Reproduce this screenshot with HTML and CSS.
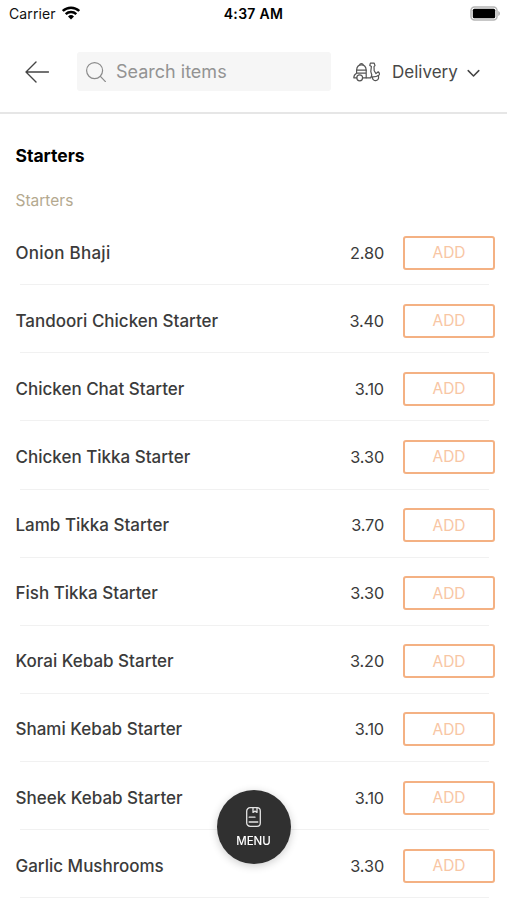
FILE: index.html
```
<!DOCTYPE html>
<html lang="en">
<head>
    <meta charset="UTF-8">
    <meta name="viewport" content="width=device-width, initial-scale=1.0">
    <title>Starters</title>
    <link rel="stylesheet" href="styles.css">
</head>
<body>

<div class="status-bar">
    <div class="carrier">
        <span>Carrier</span>
        <svg class="wifi" viewBox="0 0 18 14" width="18" height="14">
            <path d="M.8 5a11.8 11.8 0 0 1 16.4 0" />
            <path d="M3.7 8.2a7.6 7.6 0 0 1 10.6 0" />
            <path class="dot" d="M9 13.6 6 10.5a4.4 4.4 0 0 1 6 0z" />
        </svg>
    </div>
    <span class="time">4:37 AM</span>
    <div class="battery-wrapper">
        <svg width="31" height="15" viewBox="0 0 31 15">
            <rect x="1" y="1" width="26" height="13" rx="3.5" fill="#fff" stroke="#b5b5b5" stroke-width="1.5" />
            <rect x="2.8" y="2.8" width="22.4" height="9.4" rx="1.5" fill="#000" />
            <path d="M28.2 5v5c2.4-.8 2.4-4.2 0-5z" fill="#b5b5b5" />
        </svg>
    </div>
</div>

<header class="toolbar">
    <svg class="back" viewBox="0 0 24 22" width="24" height="22">
        <path d="M23.5 11H1M11 1 1 11l10 10" />
    </svg>
    <div class="search">
        <svg viewBox="0 0 20 20" width="20" height="20">
            <circle cx="8.6" cy="8.6" r="8" />
            <path d="M14.4 14.4 19.4 19.6" />
        </svg>
        <span>Search items</span>
    </div>
    <div class="order-type">
        <svg class="scooter" viewBox="0 0 27 20" width="27" height="20">
            <path d="M3.6 8.2C3.8 4.6 5.6 2.8 8.4 2.8s4.6 1.8 4.8 5.4z" />
            <path d="M6.6 3C6.9 1.2 9.9 1.2 10.2 3" />
            <path d="M3.6 8.2v3C1.6 12.2.8 13.6.8 15.8h3M13.2 8.2v7.6H9.6M3.6 11.2h9.6" />
            <path d="M3.8 15.8c0-4 5.8-4 5.8 0 0 4-5.8 4-5.8 0z" />
            <path d="M13.2 15.8h4.6l1-2.8-1-3.4.6-5.2-1.6-1 .6-2.2h3.8l.8 2.4-1 1 .2 4.2 1.8 2.8 2.2-1.8c1.4 1.2 1.6 2.6.6 3.4-2 1.4-4.4 2-7.4 1.6" />
            <path d="M19.4 15.4c.2 4.4 6.6 4.2 6.2-.4l-.4-1.4" />
        </svg>
        <span>Delivery</span>
        <svg class="chevron" viewBox="0 0 13 9" width="13" height="9">
            <path d="M1.2 1.6 6.5 7 11.8 1.6" />
        </svg>
    </div>
</header>

<main class="menu">
    <h1>Starters</h1>
    <h2>Starters</h2>
    <ul class="items">
        <li class="item"><span class="name">Onion Bhaji</span><span class="price">2.80</span><button class="add">ADD</button></li>
        <li class="item"><span class="name">Tandoori Chicken Starter</span><span class="price">3.40</span><button class="add">ADD</button></li>
        <li class="item"><span class="name">Chicken Chat Starter</span><span class="price">3.10</span><button class="add">ADD</button></li>
        <li class="item"><span class="name">Chicken Tikka Starter</span><span class="price">3.30</span><button class="add">ADD</button></li>
        <li class="item"><span class="name">Lamb Tikka Starter</span><span class="price">3.70</span><button class="add">ADD</button></li>
        <li class="item"><span class="name">Fish Tikka Starter</span><span class="price">3.30</span><button class="add">ADD</button></li>
        <li class="item"><span class="name">Korai Kebab Starter</span><span class="price">3.20</span><button class="add">ADD</button></li>
        <li class="item"><span class="name">Shami Kebab Starter</span><span class="price">3.10</span><button class="add">ADD</button></li>
        <li class="item"><span class="name">Sheek Kebab Starter</span><span class="price">3.10</span><button class="add">ADD</button></li>
        <li class="item"><span class="name">Garlic Mushrooms</span><span class="price">3.30</span><button class="add">ADD</button></li>
    </ul>
</main>

<button class="menu-button">
    <svg viewBox="0 0 15 20" width="15" height="20">
        <rect x=".7" y=".7" width="13.6" height="18.6" rx="3.4" />
        <path d="M7 .8v4.6l2-1.3 2 1.3V.8M3.2 10.2H9M3.2 15h8.6" />
    </svg>
    <span>MENU</span>
</button>

</body>
</html>
```
FILE: styles.css
```
:root {
    --text-color: #3b3b3b;
    --accent-color: #f4b183;
    --accent-text-color: #f8c6a4;
    --line-color: #f1f1f1;
}

* {
    box-sizing: border-box;
}

body {
    margin: 0;
    height: 900px;
    overflow: hidden;
    background: #fff;
    color: var(--text-color);
    font-family: Inter, "Liberation Sans", sans-serif;
}

svg {
    display: block;
    flex: none;
    fill: none;
    stroke-linecap: round;
    stroke-linejoin: round;
}

button {
    font-family: inherit;
}

.status-bar {
    display: grid;
    grid-template-columns: 1fr auto 1fr;
    align-items: center;
    height: 27px;
    padding: 0 6px 0 9px;
    color: #111;
    font-size: 14px;
}

.carrier {
    display: flex;
    align-items: center;
    gap: 6px;
    letter-spacing: 0.1px;
}

.wifi {
    margin-top: -2px;
    stroke: #000;
    stroke-width: 2.4;
    stroke-linecap: butt;
}

.wifi .dot {
    fill: #000;
    stroke: none;
}

.time {
    margin-left: -3px;
    color: #000;
    font-weight: 600;
    letter-spacing: 0.3px;
}

.battery-wrapper {
    display: flex;
    justify-content: flex-end;
    margin-top: -1px;
}

.toolbar {
    display: flex;
    align-items: center;
    height: 87px;
    padding: 4px 27px 0 25px;
    border-bottom: 2px solid #e6e6e6;
}

.back {
    stroke: #444;
    stroke-width: 1.4;
}

.search {
    display: flex;
    align-items: center;
    gap: 10px;
    width: 254px;
    height: 39px;
    margin-left: 28px;
    padding-left: 9px;
    border-radius: 3px;
    background: #f6f6f6;
    color: #939393;
    font-size: 18px;
}

.search svg {
    stroke: #8b8b8b;
    stroke-width: 1.2;
}

.order-type {
    display: flex;
    align-items: center;
    margin-left: 22px;
    color: #484848;
    font-size: 17px;
}

.scooter {
    margin-right: 12px;
    stroke: #555;
    stroke-width: 1.2;
}

.chevron {
    margin: 3px 0 0 9px;
    stroke: #444;
    stroke-width: 1.5;
}

.menu {
    padding: 30px 12px 0 15.5px;
}

h1 {
    margin: 0;
    color: #000;
    font-size: 17.5px;
    font-weight: 700;
    line-height: 24px;
}

h2 {
    margin: 21px 0 4px;
    color: #b4a98f;
    font-size: 15.5px;
    font-weight: 400;
    line-height: 24px;
}

.items {
    margin: 0;
    padding: 0;
    list-style: none;
}

.item {
    display: flex;
    align-items: center;
    height: 68.13px;
    padding-top: 3px;
    background: linear-gradient(var(--line-color), var(--line-color)) 4.5px 100% / 469px 1px no-repeat;
}

.name {
    flex: 1;
    font-size: 17px;
    font-weight: 500;
}

.item:first-child .name {
    letter-spacing: 0.25px;
}

.price {
    font-size: 16.3px;
    letter-spacing: -0.15px;
}

.add {
    width: 92px;
    height: 34px;
    margin-left: 19px;
    padding: 0;
    border: 2px solid var(--accent-color);
    border-radius: 3px;
    background: #fff;
    color: var(--accent-text-color);
    font-size: 15.5px;
}

/* floats above the scrolling list */
.menu-button {
    position: fixed;
    left: 217px;
    top: 790px;
    display: flex;
    flex-direction: column;
    align-items: center;
    width: 74px;
    height: 74px;
    padding: 17px 1px 0 0;
    border: 0;
    border-radius: 50%;
    background: #303030;
    box-shadow: 0 2px 8px rgba(0, 0, 0, 0.2);
    color: #fff;
    font-size: 11.5px;
    font-weight: 500;
}

.menu-button svg {
    stroke: #e4e4e4;
    stroke-width: 1.3;
}

.menu-button span {
    margin-top: 7px;
}
```
